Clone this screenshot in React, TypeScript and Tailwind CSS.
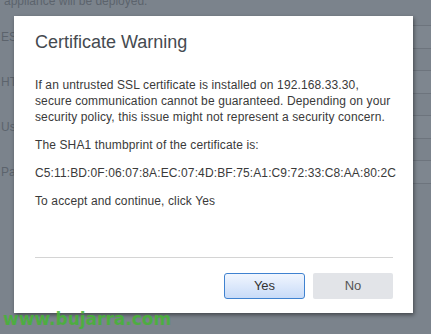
const sans = { fontFamily: '"Liberation Sans", Arial, sans-serif' }

const fields = ['ESXi Host', 'HTTPS Port', 'User Name', 'Password']

function Background() {
  return (
    <div className="h-[334px] w-[431px] overflow-hidden bg-[#7b838c] text-[12px] text-[#5c636c]" style={sans}>
      <p className="-mt-[7px] pl-[4px] leading-[16px]">appliance will be deployed.</p>
      <div className="mt-[16px] flex flex-col gap-[21px]">
        {fields.map((f) => (
          <div key={f} className="flex h-[24px] items-center">
            <span className="w-[14px] shrink-0 overflow-hidden whitespace-nowrap pl-[1px]">{f}</span>
            <div className="ml-[136px] h-[24px] flex-1 border-y border-[#6d747d] bg-[#7e868f]" />
          </div>
        ))}
      </div>
    </div>
  )
}

function CertificateDialog() {
  return (
    <div
      className="absolute left-[14px] top-[16px] flex h-[297px] w-[399px] flex-col bg-white pl-[21px] pr-[20px] pt-[14px] shadow-[1px_2px_4px_rgba(0,0,0,0.45)]"
      style={sans}
    >
      <h2 className="text-[18px] leading-[24px] text-[#454a50]">Certificate Warning</h2>
      <div className="mt-[23px] space-y-3 text-[12px] leading-4 tracking-[0.12px] text-[#3a3a3a]">
        <p>
          <span className="block">If an untrusted SSL certificate is installed on 192.168.33.30,</span>
          <span className="block">secure communication cannot be guaranteed. Depending on your</span>
          <span className="block">security policy, this issue might not represent a security concern.</span>
        </p>
        <p>The SHA1 thumbprint of the certificate is:</p>
        <p>C5:11:BD:0F:06:07:8A:EC:07:4D:BF:75:A1:C9:72:33:C8:AA:80:2C</p>
        <p>To accept and continue, click Yes</p>
      </div>
      <div className="mt-auto flex justify-end gap-[8px] border-t border-[#d4d4d4] pb-[14px] pt-[15px]">
        <button className="h-[26px] w-[81px] rounded-[3px] border border-[#3f82d0] bg-gradient-to-b from-[#f1f6fe] to-[#c8dbf8] text-[13px] text-[#333]">
          Yes
        </button>
        <button className="h-[26px] w-[80px] rounded-[2px] bg-[#e2e4e8] text-[13px] text-[#555]">No</button>
      </div>
    </div>
  )
}

export default function App() {
  return (
    <div className="relative h-[334px] w-[431px] overflow-hidden">
      <Background />
      <CertificateDialog />
      <span
        className="absolute left-[3px] top-[308px] text-[17px] font-bold leading-[22px] text-[#45b534]/85"
        style={{ fontFamily: '"DejaVu Sans", Verdana, sans-serif' }}
      >
        www.bujarra.com
      </span>
    </div>
  )
}
